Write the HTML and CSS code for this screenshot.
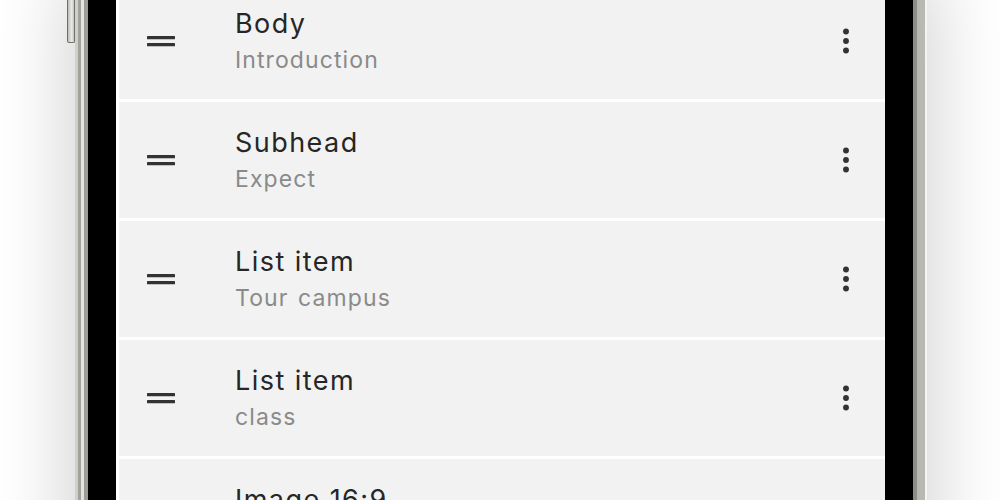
FILE: index.html
```html
<!DOCTYPE html>
<html lang="en">
<head>
<meta charset="utf-8">
<title>List editor</title>
<link rel="stylesheet" href="styles.css">
</head>
<body>
<div class="stage">
  <div class="phone">
    <div class="side-button"></div>
    <div class="bezel">
      <div class="screen">
        <div class="row">
          <svg class="handle" viewBox="0 0 28 11" width="28" height="11"><rect x="0" y="0" width="28" height="3.2" rx="0.5"/><rect x="0" y="7" width="28" height="3.2" rx="0.5"/></svg>
          <div class="text"><div class="title">Body</div><div class="sub">Introduction</div></div>
          <svg class="more" viewBox="0 0 24 24" width="38" height="38"><circle cx="12" cy="6" r="1.85"/><circle cx="12" cy="12" r="1.85"/><circle cx="12" cy="18" r="1.85"/></svg>
        </div>
        <div class="row">
          <svg class="handle" viewBox="0 0 28 11" width="28" height="11"><rect x="0" y="0" width="28" height="3.2" rx="0.5"/><rect x="0" y="7" width="28" height="3.2" rx="0.5"/></svg>
          <div class="text"><div class="title">Subhead</div><div class="sub">Expect</div></div>
          <svg class="more" viewBox="0 0 24 24" width="38" height="38"><circle cx="12" cy="6" r="1.85"/><circle cx="12" cy="12" r="1.85"/><circle cx="12" cy="18" r="1.85"/></svg>
        </div>
        <div class="row">
          <svg class="handle" viewBox="0 0 28 11" width="28" height="11"><rect x="0" y="0" width="28" height="3.2" rx="0.5"/><rect x="0" y="7" width="28" height="3.2" rx="0.5"/></svg>
          <div class="text"><div class="title">List item</div><div class="sub">Tour campus</div></div>
          <svg class="more" viewBox="0 0 24 24" width="38" height="38"><circle cx="12" cy="6" r="1.85"/><circle cx="12" cy="12" r="1.85"/><circle cx="12" cy="18" r="1.85"/></svg>
        </div>
        <div class="row">
          <svg class="handle" viewBox="0 0 28 11" width="28" height="11"><rect x="0" y="0" width="28" height="3.2" rx="0.5"/><rect x="0" y="7" width="28" height="3.2" rx="0.5"/></svg>
          <div class="text"><div class="title">List item</div><div class="sub">class</div></div>
          <svg class="more" viewBox="0 0 24 24" width="38" height="38"><circle cx="12" cy="6" r="1.85"/><circle cx="12" cy="12" r="1.85"/><circle cx="12" cy="18" r="1.85"/></svg>
        </div>
        <div class="row">
          <svg class="handle" viewBox="0 0 28 11" width="28" height="11"><rect x="0" y="0" width="28" height="3.2" rx="0.5"/><rect x="0" y="7" width="28" height="3.2" rx="0.5"/></svg>
          <div class="text"><div class="title">Image 16:9</div><div class="sub">Campus photo</div></div>
          <svg class="more" viewBox="0 0 24 24" width="38" height="38"><circle cx="12" cy="6" r="1.85"/><circle cx="12" cy="12" r="1.85"/><circle cx="12" cy="18" r="1.85"/></svg>
        </div>
      </div>
    </div>
  </div>
</div>
</body>
</html>
```

FILE: styles.css
```css
html, body {
  margin: 0;
  padding: 0;
  height: 500px;
  overflow: hidden;
  background: #ffffff;
}

.stage {
  padding-left: 75px;
  margin-top: -17px;
}

.phone {
  position: relative;
  width: 852px;
  box-sizing: border-box;
  padding: 0 14px 0 13px;
  background: linear-gradient(to right,
    #cfcfcb 0, #cfcfcb 3px,
    #a2a29d 3px, #a2a29d 6px,
    #e2e2de 6px, #e2e2de 9px,
    #9c9c97 9px, #9c9c97 13px,
    #000 13px, #000 calc(100% - 14px),
    #8e8e89 calc(100% - 14px), #8e8e89 calc(100% - 10px),
    #b9b9b4 calc(100% - 10px), #b9b9b4 calc(100% - 2px),
    #f4f4f2 calc(100% - 2px));
  box-shadow: 0 0 70px 10px rgba(0, 0, 0, 0.17);
}

.side-button {
  position: absolute;
  left: -8px;
  top: -20px;
  width: 6px;
  height: 79px;
  border: 1px solid #6e6e6a;
  border-top: none;
  border-radius: 0 0 2px 2px;
  background: linear-gradient(to right, #bdbdb8, #e9e9e6 60%, #c4c4bf);
}

.bezel {
  background: #000;
  padding: 0 28px;
}

.screen {
  background: #ffffff;
  padding-left: 3px;
  display: flex;
  flex-direction: column;
  gap: 3px;
  font-family: "Inter", "Open Sans", sans-serif;
}

.row {
  height: 116px;
  background: #f2f2f2;
  display: flex;
  align-items: center;
  padding: 0 20px 0 28px;
}

.handle {
  flex: none;
  fill: #333333;
}

.text {
  flex: 1;
  margin-left: 60px;
  display: flex;
  flex-direction: column;
  padding-top: 3px;
}

.title {
  font-size: 27px;
  line-height: 34px;
  letter-spacing: 1.45px;
  color: #262626;
}

.sub {
  font-size: 23px;
  line-height: 38px;
  letter-spacing: 1.1px;
  word-spacing: 2px;
  color: #8a8a8a;
}

.more {
  flex: none;
  fill: #333333;
}
```
